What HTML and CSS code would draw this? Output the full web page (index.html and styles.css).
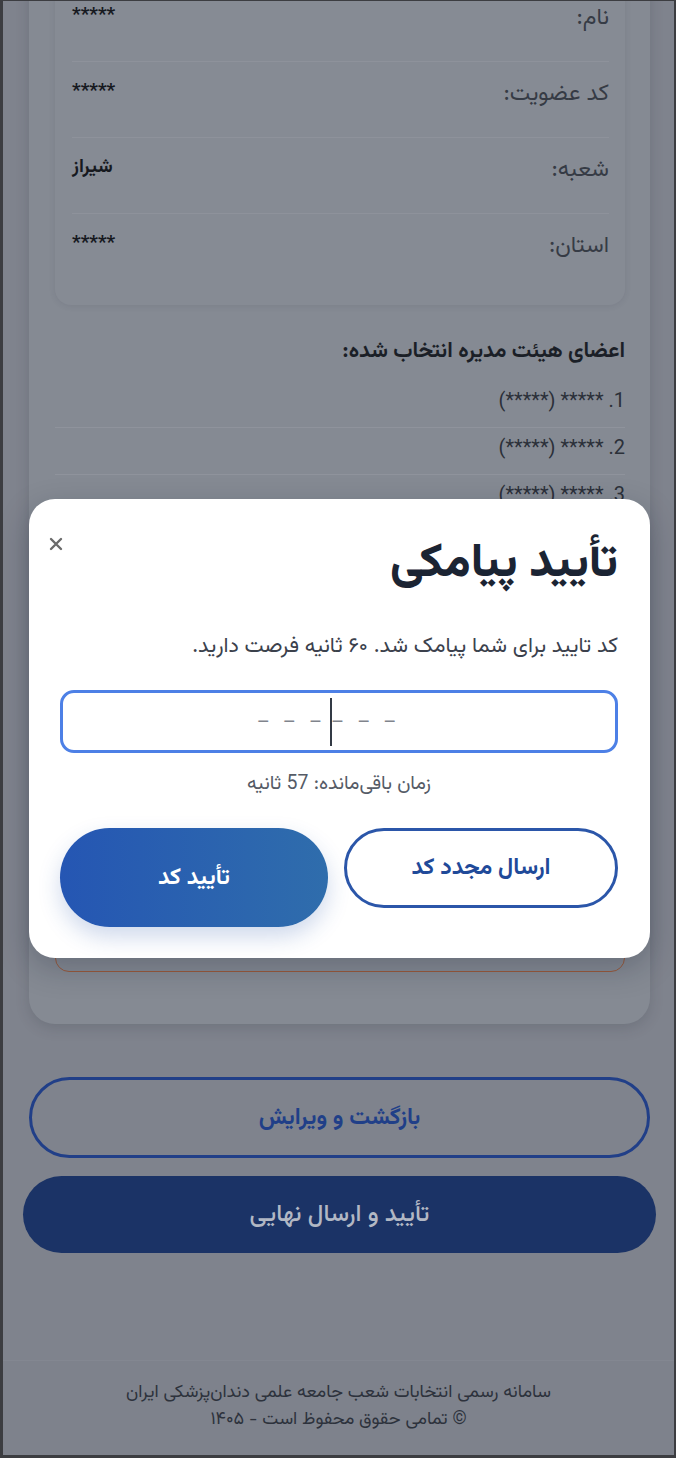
FILE: index.html
```html
<!DOCTYPE html>
<html lang="fa" dir="rtl">
<head>
<meta charset="utf-8">
<title>تأیید پیامکی</title>
<link rel="stylesheet" href="styles.css">
</head>
<body>
<div class="screen">
  <main class="page">
    <section class="card">
      <div class="info">
        <div class="row"><span class="label">نام:</span><span class="value">*****</span></div>
        <div class="row"><span class="label">کد عضویت:</span><span class="value">*****</span></div>
        <div class="row"><span class="label">شعبه:</span><span class="value">شیراز</span></div>
        <div class="row last"><span class="label">استان:</span><span class="value">*****</span></div>
      </div>
      <h3 class="members-title">اعضای هیئت مدیره انتخاب شده:</h3>
      <ul class="members">
        <li>1. ***** (*****)</li>
        <li>2. ***** (*****)</li>
        <li>3. ***** (*****)</li>
      </ul>
      <div class="notice"></div>
    </section>
    <div class="actions">
      <button class="btn-back">بازگشت و ویرایش</button>
      <button class="btn-final">تأیید و ارسال نهایی</button>
    </div>
    <footer class="footer">
      <p>سامانه رسمی انتخابات شعب جامعه علمی دندان‌پزشکی ایران</p>
      <p>© تمامی حقوق محفوظ است - ۱۴۰۵</p>
    </footer>
  </main>

  <div class="modal">
    <button class="close" aria-label="بستن">
      <svg width="14" height="14" viewBox="0 0 14 14"><path d="M2 2 L12 12 M12 2 L2 12" stroke="#6b6b6b" stroke-width="2.4" stroke-linecap="round"/></svg>
    </button>
    <h2 class="modal-title">تأیید پیامکی</h2>
    <p class="modal-sub">کد تایید برای شما پیامک شد. ۶۰ ثانیه فرصت دارید.</p>
    <div class="otp"><span class="dashes">–––</span><span class="caret"></span><span class="dashes">–––</span></div>
    <p class="timer">زمان باقی‌مانده: 57 ثانیه</p>
    <div class="modal-buttons">
      <button class="btn-resend">ارسال مجدد کد</button>
      <button class="btn-verify">تأیید کد</button>
    </div>
  </div>
</div>
</body>
</html>
```
FILE: styles.css
```css
* { box-sizing: border-box; }
html, body { margin: 0; padding: 0; }
body {
  background: #3c3d41;
  font-family: "Vazirmatn", Roboto, "Noto Sans Arabic", "DejaVu Sans", sans-serif;
  direction: rtl;
}
.screen {
  position: relative;
  margin: 1px 2px 0 3px;
  height: 1454px;
  background: #7f838d;
  overflow: hidden;
}
.page {
  display: flex;
  flex-direction: column;
  align-items: stretch;
  margin-top: -45px;
}
.card {
  margin: 0 24px 0 26px;
  background: #858a93;
  border-radius: 0 0 26px 26px;
  padding: 15px 25px 52px 26px;
  box-shadow: 0 4px 14px rgba(40, 44, 54, 0.18);
}
.info {
  background: #868b94;
  border-radius: 16px;
  padding: 15px 16px 15px 17px;
  box-shadow: 0 1px 6px rgba(40, 44, 54, 0.1);
}
.row {
  display: flex;
  justify-content: space-between;
  align-items: flex-start;
  padding: 18px 0 29px;
  border-bottom: 1px solid #8e929b;
}
.row.last { border-bottom: none; padding-bottom: 30px; }
.label {
  font-size: 23px;
  line-height: 28px;
  color: #363b45;
}
.value {
  font-size: 19px;
  line-height: 24px;
  font-weight: 700;
  color: #16191f;
}
.members-title {
  margin: 33px 0 0;
  font-size: 21.5px;
  line-height: 28px;
  font-weight: 700;
  color: #1b1f27;
}
.members {
  list-style: none;
  margin: 15px 0 0;
  padding: 0;
}
.members li {
  font-family: Roboto, "Vazirmatn", sans-serif;
  font-size: 20px;
  line-height: 26px;
  color: #2b3039;
  padding: 6px 0 14px;
  border-bottom: 1px solid #8f939c;
}
.notice {
  margin-top: 20px;
  height: 430px;
  border: 1px solid #9a5a3c;
  border-radius: 14px;
}
.actions {
  display: flex;
  flex-direction: column;
  align-items: center;
  gap: 18px;
  margin-top: 53px;
}
.actions button {
  font-family: inherit;
  border-radius: 44px;
  cursor: pointer;
}
.btn-back {
  height: 81px;
  margin-right: 24px;
  margin-left: 26px;
  align-self: stretch;
  background: transparent;
  border: 3px solid #213f88;
  color: #203f88;
  font-size: 23px;
  font-weight: 700;
}
.btn-final {
  align-self: stretch;
  margin: 0 18px 0 20px;
  height: 77px;
  background: #1b3366;
  border: none;
  color: #b2b8c4;
  font-size: 24px;
  font-weight: 500;
}
.footer {
  margin-top: 107px;
  border-top: 1px solid #838791;
  background: #7e828c;
  padding: 19px 0 26px;
  text-align: center;
  color: #2d323c;
  font-size: 18px;
  line-height: 27px;
  height: 200px;
}
.footer p { margin: 0; }

/* modal */
.modal {
  position: absolute;
  top: 498px;
  left: 26px;
  width: 621px;
  height: 459px;
  background: #ffffff;
  border-radius: 26px;
  padding: 38px 32px 31px 31px;
  box-shadow: 0 10px 30px rgba(15, 23, 42, 0.25);
  display: flex;
  flex-direction: column;
}
.close {
  position: absolute;
  top: 38px;
  left: 20px;
  width: 14px;
  height: 14px;
  padding: 0;
  border: none;
  background: none;
  display: flex;
}
.modal-title {
  margin: 0;
  font-size: 47px;
  line-height: 56px;
  font-weight: 800;
  color: #1b2433;
}
.modal-sub {
  margin: 40px 0 0;
  font-size: 21.5px;
  line-height: 28px;
  color: #3b414c;
}
.otp {
  margin-top: 29px;
  height: 63px;
  border: 3px solid #4d80e6;
  border-radius: 14px;
  display: flex;
  justify-content: center;
  align-items: center;
  direction: ltr;
  padding-right: 12px;
  color: #80848c;
  font-family: Roboto, sans-serif;
  font-size: 20px;
  letter-spacing: 13px;
}
.dashes { white-space: pre; }
.caret {
  display: inline-block;
  width: 2px;
  height: 48px;
  background: #333a45;
  margin: 0 -1px 0 -5px;
}
.timer {
  margin: 19px 0 0;
  text-align: center;
  font-size: 19.5px;
  line-height: 24px;
  color: #555b66;
}
.modal-buttons {
  margin-top: 32px;
  display: flex;
  gap: 16px;
  align-items: flex-start;
}
.modal-buttons button {
  flex: 1;
  font-family: inherit;
  font-size: 23px;
  font-weight: 700;
  border-radius: 50px;
  cursor: pointer;
}
.btn-resend {
  height: 80px;
  background: #fff;
  border: 3px solid #2b56a9;
  color: #1f4a99;
}
.btn-verify {
  height: 99px;
  border: none;
  color: #ffffff;
  background: linear-gradient(90deg, #2556b3 0%, #2f6dac 100%);
  box-shadow: 0 10px 22px rgba(37, 80, 170, 0.22);
}
```
